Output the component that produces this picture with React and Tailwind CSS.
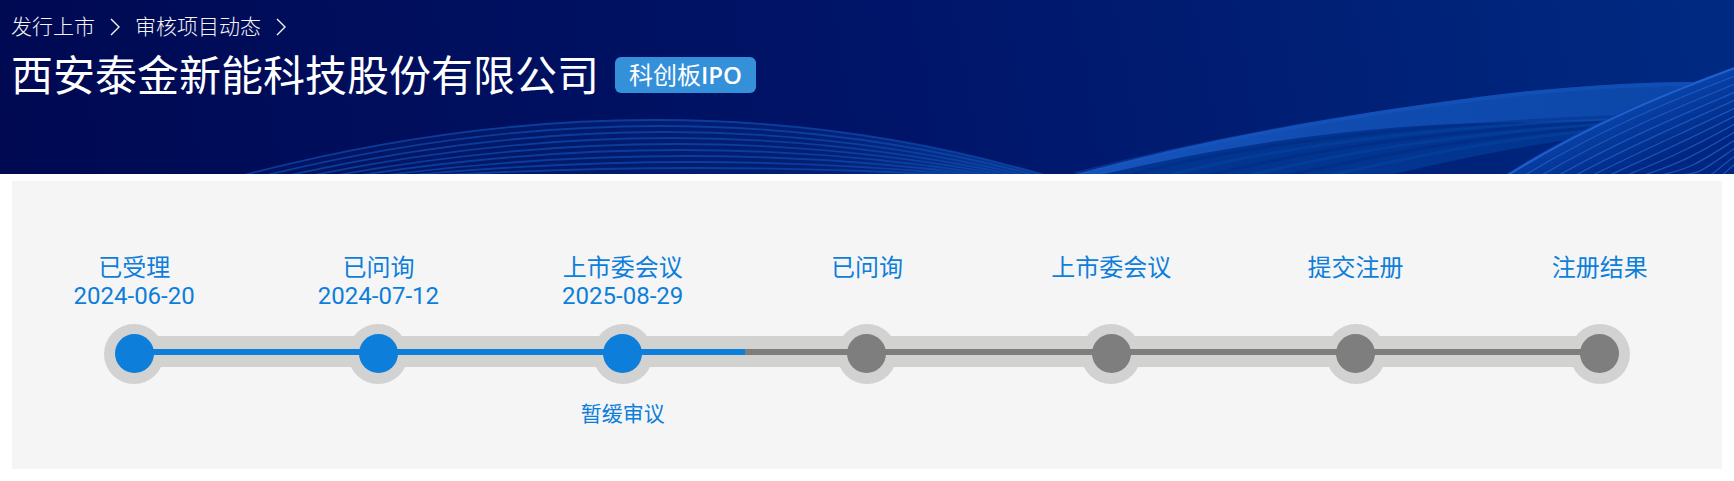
import clsx from 'clsx';

const steps = [
    { label: '已受理', date: '2024-06-20', done: true },
    { label: '已问询', date: '2024-07-12', done: true },
    { label: '上市委会议', date: '2025-08-29', note: '暂缓审议', done: true },
    { label: '已问询' },
    { label: '上市委会议' },
    { label: '提交注册' },
    { label: '注册结果' },
];

const arcLines = [0, 1, 2, 3, 4, 5, 6, 7, 8];
const fanLines = [0, 1, 2, 3, 4, 5, 6, 7, 8, 9, 10, 11, 12];
const bandLines = [0, 1, 2, 3, 4, 5];

function Waves() {
    return (
        <svg
            className="absolute inset-0 h-full w-full"
            viewBox="0 0 1734 174"
            preserveAspectRatio="none"
            fill="none"
            aria-hidden="true"
        >
            <defs>
                <linearGradient id="arc" x1="240" x2="1045" y1="0" y2="0" gradientUnits="userSpaceOnUse">
                    <stop offset="0" stopColor="#0a3790" stopOpacity="0.15" />
                    <stop offset="0.7" stopColor="#063a94" stopOpacity="0.3" />
                    <stop offset="1" stopColor="#0a48ac" stopOpacity="0.7" />
                </linearGradient>
                <linearGradient id="band" x1="1075" x2="1734" y1="0" y2="0" gradientUnits="userSpaceOnUse">
                    <stop offset="0" stopColor="#1c5cc8" />
                    <stop offset="0.4" stopColor="#1452b8" />
                    <stop offset="1" stopColor="#0d49ae" />
                </linearGradient>
                <linearGradient id="fan" x1="1610" x2="1640" y1="100" y2="174" gradientUnits="userSpaceOnUse">
                    <stop offset="0" stopColor="#0b49b0" />
                    <stop offset="1" stopColor="#00267f" />
                </linearGradient>
            </defs>

            {/* Left arc */}
            <path d="M240 176 Q655 62 1048 176 Z" fill="url(#arc)" />
            {arcLines.map((i) => (
                <path
                    key={i}
                    d={`M${240 + i * 23} 176 Q${665 + i * 4} ${64 + i * 12} ${1048 - i * 10} 176`}
                    stroke="#1048aa"
                    strokeOpacity="0.75"
                    strokeWidth="1.8"
                />
            ))}

            {/* Wide band */}
            <path
                d="M1073 175 C1190 143 1340 113 1520 92 C1600 84 1670 81 1734 82 V122 C1640 128 1520 143 1390 175 Z"
                fill="#023590"
            />
            <path
                d="M1073 175 C1190 143 1340 113 1520 92 C1600 84 1670 81 1734 82 V116 C1600 124 1480 120 1390 128 C1290 136 1190 154 1100 175 Z"
                fill="url(#band)"
                fillOpacity="0.8"
            />
            <path
                d="M1075 174 C1190 144 1340 115 1520 94 C1600 86 1670 83 1734 84"
                stroke="#1e60cc"
                strokeOpacity="0.3"
                strokeWidth="4"
            />
            {bandLines.map((i) => (
                <path
                    key={i}
                    d={`M${1130 + i * 40} 175 C${1230 + i * 32} ${148 + i * 3} ${1380 + i * 20} ${124 + i * 3} 1640 ${116 + i * 2}`}
                    stroke={i % 2 ? '#0a4cac' : '#00267c'}
                    strokeOpacity="0.35"
                    strokeWidth="3"
                />
            ))}

            {/* Right fan */}
            <path d="M1506 174 C1590 122 1660 94 1734 67 V174 Z" fill="url(#fan)" />
            {fanLines.map((i) => (
                <path
                    key={i}
                    d={`M${1508 + i * 17} 175 C${1590 + i * 11} ${124 + i * 5} ${1670 + i * 3} ${92 + i * 8} 1735 ${68 + i * 8}`}
                    stroke="#2563d4"
                    strokeOpacity={i === 0 ? 0.9 : 0.7}
                    strokeWidth={i === 0 ? 2 : 1.3}
                />
            ))}
        </svg>
    );
}

function Chevron() {
    return (
        <svg className="h-[18px] w-2.5" viewBox="0 0 10 18" fill="none" stroke="currentColor" strokeWidth="1.4" aria-hidden="true">
            <path d="M1 1 L9 9 L1 17" />
        </svg>
    );
}

function Segment({ hidden, done }) {
    return (
        <div className={clsx('mt-3 h-[31px] flex-1 pt-[13px]', !hidden && 'bg-[#d2d2d1]')}>
            {!hidden && <div className={clsx('h-1.5', done ? 'bg-[#0d7eda]' : 'bg-[#7e7e7e]')} />}
        </div>
    );
}

function Step({ step, first, last }) {
    return (
        <li className="text-center text-2xl leading-7 text-[#0d7eda]">
            <div className="min-h-14 leading-7">
                <p>{step.label}</p>
                {step.date && <time dateTime={step.date} className="block">{step.date}</time>}
            </div>

            {/* Ring, track and dot share one grid cell */}
            <div className="mt-3.5 grid">
                <span className="col-start-1 row-start-1 size-[60px] justify-self-center rounded-full bg-[#d2d2d2]" />
                <div className="col-start-1 row-start-1 flex">
                    <Segment hidden={first} done={step.done} />
                    <Segment hidden={last} done={step.done} />
                </div>
                <span
                    className={clsx(
                        'col-start-1 row-start-1 mt-2.5 size-[39px] justify-self-center rounded-full',
                        step.done ? 'bg-[#0d7eda]' : 'bg-[#7e7e7e]'
                    )}
                />
            </div>

            <p className="mt-4 min-h-7 text-[21px] leading-7">{step.note}</p>
        </li>
    );
}

export default function App() {
    return (
        <div className="bg-white pb-3 font-[Roboto,'Noto_Sans_CJK_SC',sans-serif]">
            <header className="relative bg-linear-[80deg] from-[#000952] via-[#001468] to-[#002a82] px-[11px] pt-[9px] pb-[69px] font-['Noto_Sans','Noto_Sans_CJK_SC',sans-serif] text-white">
                <Waves />
                <nav className="relative flex h-9 items-center gap-[15px] text-[21px] font-light text-[#f5f5f5]">
                    <a href="#listing">发行上市</a>
                    <Chevron />
                    <a href="#projects">审核项目动态</a>
                    <Chevron />
                </nav>
                <div className="relative flex h-[60px] items-center gap-4">
                    <h1 className="text-[42px] leading-none">西安泰金新能科技股份有限公司</h1>
                    <span className="flex h-9 items-center rounded-md bg-[#3490d9] px-3.5 text-2xl">
                        科创板<b className="font-['Open_Sans',sans-serif] font-semibold">IPO</b>
                    </span>
                </div>
            </header>

            <main className="mx-3 mt-[7px] bg-[#f5f5f5] pt-[73px] pb-[41px]">
                <ol className="grid grid-cols-7">
                    {steps.map((step, i) => (
                        <Step key={i} step={step} first={i === 0} last={i === steps.length - 1} />
                    ))}
                </ol>
            </main>
        </div>
    );
}
